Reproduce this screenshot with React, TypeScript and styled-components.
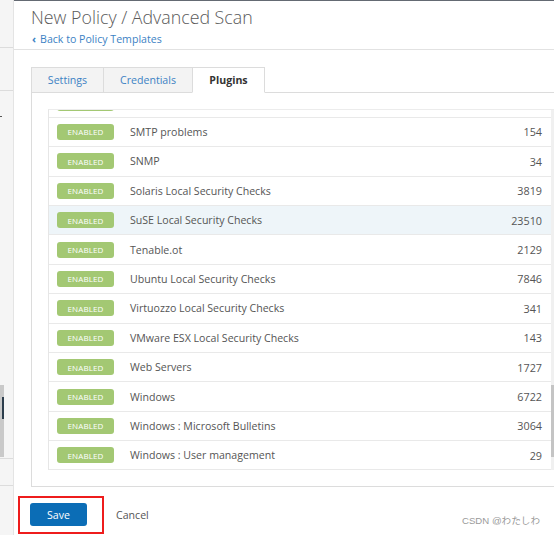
import React, { useLayoutEffect, useRef } from "react";
import styled, { createGlobalStyle } from "styled-components";

const Global = createGlobalStyle`
  html, body { margin: 0; padding: 0; overflow: hidden; background: #fff; }
  body { font-family: "Open Sans", "Noto Sans", Arial, sans-serif; }
  * { box-sizing: border-box; }
`;

const Root = styled.div`
  position: relative;
  width: 554px;
  height: 535px;
  overflow: hidden;
`;

const Layout = styled.div`
  display: flex;
  width: 640px;
  height: 535px;
`;

const Sidebar = styled.aside`
  width: 14px;
  flex: none;
  display: flex;
  flex-direction: column;
  background: #f5f5f5;
  border-right: 1px solid #e4e4e4;
`;

const SideGap = styled.div<{ $h: number }>`
  height: ${(p) => p.$h}px;
  flex: none;
`;

const SideLine = styled.div`
  height: 1px;
  background: #dcdcdc;
  flex: none;
`;

const SideTick = styled.div`
  width: 2px;
  height: 1px;
  background: #555;
  flex: none;
`;

const SideScroll = styled.div`
  width: 4px;
  height: 72px;
  flex: none;
  background: #c9c9c9;
  display: flex;
  flex-direction: column;
  padding-top: 12px;
`;

const SideThumb = styled.div`
  margin-left: 2px;
  width: 2px;
  height: 22px;
  background: #2c3d4c;
`;

const Main = styled.main`
  flex: 1;
  display: flex;
  flex-direction: column;
  border-top: 1px solid #646a73;
`;

const Header = styled.header`
  padding: 3px 0 2px 17px;
  border-bottom: 1px solid #e2e2e2;
`;

const Title = styled.h1`
  margin: 0;
  font-size: 17.8px;
  line-height: 26px;
  font-weight: 300;
  color: #5a5a5a;
`;

const BackLink = styled.a`
  display: flex;
  align-items: center;
  gap: 4px;
  margin-top: 1px;
  font-size: 10.6px;
  line-height: 16px;
  color: #3c82c4;
  text-decoration: none;
`;

const Chevron = styled.span`
  font-size: 11px;
  font-weight: 700;
  line-height: 16px;
  margin-left: 1px;
`;

const Body = styled.section`
  padding: 17px 0 0 17px;
  display: flex;
  flex-direction: column;
`;

const Tabs = styled.nav`
  display: flex;
  margin-bottom: -1px;
  position: relative;
  z-index: 1;
`;

const Tab = styled.div<{ $active?: boolean; $w: number }>`
  width: ${(p) => p.$w}px;
  height: 26px;
  display: flex;
  align-items: center;
  justify-content: center;
  font-size: 10.6px;
  border: 1px solid #dcdcdc;
  border-right-width: 0;
  border-bottom-color: ${(p) => (p.$active ? "#fff" : "#dcdcdc")};
  background: ${(p) => (p.$active ? "#fff" : "#f3f3f3")};
  color: ${(p) => (p.$active ? "#333" : "#3c82c4")};
  font-weight: ${(p) => (p.$active ? 700 : 400)};
  &:last-child { border-right-width: 1px; }
`;

const Panel = styled.div`
  width: 544px;
  border: 1px solid #dcdcdc;
  padding: 16px;
`;

const ListFrame = styled.div`
  height: 361px;
  display: flex;
  border-left: 1px solid #e6e6e6;
  border-top: 1px solid #ececec;
`;

const List = styled.div`
  flex: 1;
  overflow-y: scroll;
  scrollbar-width: none;
  &::-webkit-scrollbar { display: none; }
`;

const Track = styled.div`
  width: 7px;
  flex: none;
  background: #f0f0f0;
  display: flex;
  flex-direction: column;
`;

const Thumb = styled.div<{ $top: number; $h: number }>`
  margin-top: ${(p) => p.$top}px;
  height: ${(p) => p.$h}px;
  background: #c4c4c4;
`;

const Row = styled.div<{ $hl?: boolean }>`
  height: 29.4px;
  display: flex;
  align-items: center;
  padding: 0 9px 0 8px;
  border-bottom: 1px solid #e9e9e9;
  background: ${(p) => (p.$hl ? "#eef5f9" : "#fff")};
`;

const Badge = styled.span`
  width: 57px;
  height: 16px;
  flex: none;
  display: flex;
  align-items: center;
  justify-content: center;
  background: #a3c873;
  border-radius: 3px;
  color: #fff;
  font-size: 8px;
  letter-spacing: 0.1px;
  text-transform: uppercase;
`;

const Name = styled.span`
  margin-left: 16px;
  font-size: 10.6px;
  color: #555;
  flex: 1;
  white-space: nowrap;
`;

const Count = styled.span`
  font-size: 10.8px;
  color: #555;
`;

const Footer = styled.footer`
  position: relative;
  padding: 16px 0 0 16px;
  display: flex;
  align-items: center;
  gap: 29px;
`;

const SaveButton = styled.button`
  width: 57px;
  height: 23px;
  border: none;
  border-radius: 3px;
  background: #0b6db6;
  color: #fff;
  font-family: inherit;
  font-size: 10.6px;
  padding: 0;
`;

const CancelLink = styled.span`
  font-size: 10.6px;
  color: #555;
`;

const Highlight = styled.div`
  position: absolute;
  left: 4px;
  top: 9px;
  width: 86px;
  height: 38px;
  border: 2px solid #ee1c1c;
  pointer-events: none;
`;

const Watermark = styled.div`
  position: absolute;
  right: 14px;
  top: 513px;
  font-family: "Liberation Sans", "Noto Sans CJK JP", sans-serif;
  font-size: 9.6px;
  color: #9a9a9a;
`;

type Family = { name: string; count: number };

const families: Family[] = [
  { name: "AIX Local Security Checks", count: 11329 },
  { name: "Amazon Linux Local Security Checks", count: 1913 },
  { name: "Backdoors", count: 113 },
  { name: "Brute force attacks", count: 26 },
  { name: "CentOS Local Security Checks", count: 3302 },
  { name: "CGI abuses", count: 4522 },
  { name: "CGI abuses : XSS", count: 678 },
  { name: "CISCO", count: 2109 },
  { name: "Databases", count: 847 },
  { name: "Debian Local Security Checks", count: 8203 },
  { name: "Default Unix Accounts", count: 171 },
  { name: "Denial of Service", count: 110 },
  { name: "DNS", count: 245 },
  { name: "F5 Networks Local Security Checks", count: 1003 },
  { name: "Fedora Local Security Checks", count: 14152 },
  { name: "Firewalls", count: 512 },
  { name: "FreeBSD Local Security Checks", count: 4613 },
  { name: "FTP", count: 281 },
  { name: "Gain a shell remotely", count: 336 },
  { name: "General", count: 310 },
  { name: "Gentoo Local Security Checks", count: 2552 },
  { name: "HP-UX Local Security Checks", count: 2017 },
  { name: "Huawei Local Security Checks", count: 1219 },
  { name: "Incident Response", count: 11 },
  { name: "Junos Local Security Checks", count: 609 },
  { name: "MacOS X Local Security Checks", count: 1456 },
  { name: "Mandriva Local Security Checks", count: 3102 },
  { name: "Misc.", count: 2531 },
  { name: "Mobile Devices", count: 101 },
  { name: "Netware", count: 14 },
  { name: "Oracle Linux Local Security Checks", count: 4897 },
  { name: "OracleVM Local Security Checks", count: 103 },
  { name: "Palo Alto Local Security Checks", count: 128 },
  { name: "Peer-To-Peer File Sharing", count: 82 },
  { name: "Policy Compliance", count: 53 },
  { name: "Port scanners", count: 11 },
  { name: "Red Hat Local Security Checks", count: 6327 },
  { name: "RPC", count: 44 },
  { name: "SCADA", count: 344 },
  { name: "Scientific Linux Local Security Checks", count: 2952 },
  { name: "Service detection", count: 497 },
  { name: "Settings", count: 107 },
  { name: "Slackware Local Security Checks", count: 1198 },
  { name: "SMTP problems", count: 154 },
  { name: "SNMP", count: 34 },
  { name: "Solaris Local Security Checks", count: 3819 },
  { name: "SuSE Local Security Checks", count: 23510 },
  { name: "Tenable.ot", count: 2129 },
  { name: "Ubuntu Local Security Checks", count: 7846 },
  { name: "Virtuozzo Local Security Checks", count: 341 },
  { name: "VMware ESX Local Security Checks", count: 143 },
  { name: "Web Servers", count: 1727 },
  { name: "Windows", count: 6722 },
  { name: "Windows : Microsoft Bulletins", count: 3064 },
  { name: "Windows : User management", count: 29 },
];

export default function App() {
  const listRef = useRef<HTMLDivElement>(null);

  useLayoutEffect(() => {
    const el = listRef.current;
    if (el) el.scrollTop = el.scrollHeight;
  }, []);

  return (
    <Root>
      <Global />
      <Layout>
        <Sidebar>
          <SideGap $h={47} />
          <SideLine />
          <SideGap $h={42} />
          <SideLine />
          <SideGap $h={25} />
          <SideTick />
          <SideGap $h={268} />
          <SideScroll>
            <SideThumb />
          </SideScroll>
          <SideGap $h={1} />
          <SideLine />
          <SideGap $h={26} />
          <SideLine />
        </Sidebar>
        <Main>
          <Header>
            <Title>New Policy / Advanced Scan</Title>
            <BackLink href="#">
              <Chevron>‹</Chevron>
              Back to Policy Templates
            </BackLink>
          </Header>
          <Body>
            <Tabs>
              <Tab $w={72}>Settings</Tab>
              <Tab $w={89}>Credentials</Tab>
              <Tab $w={73} $active>
                Plugins
              </Tab>
            </Tabs>
            <Panel>
              <ListFrame>
                <List ref={listRef}>
                  {families.map((f) => (
                    <Row key={f.name} $hl={f.name === "SuSE Local Security Checks"}>
                      <Badge>Enabled</Badge>
                      <Name>{f.name}</Name>
                      <Count>{f.count}</Count>
                    </Row>
                  ))}
                </List>
                <Track>
                  <Thumb $top={275} $h={72} />
                </Track>
              </ListFrame>
            </Panel>
          </Body>
          <Footer>
            <SaveButton>Save</SaveButton>
            <CancelLink>Cancel</CancelLink>
            <Highlight />
          </Footer>
        </Main>
      </Layout>
      <Watermark>CSDN @わたしわ</Watermark>
    </Root>
  );
}
